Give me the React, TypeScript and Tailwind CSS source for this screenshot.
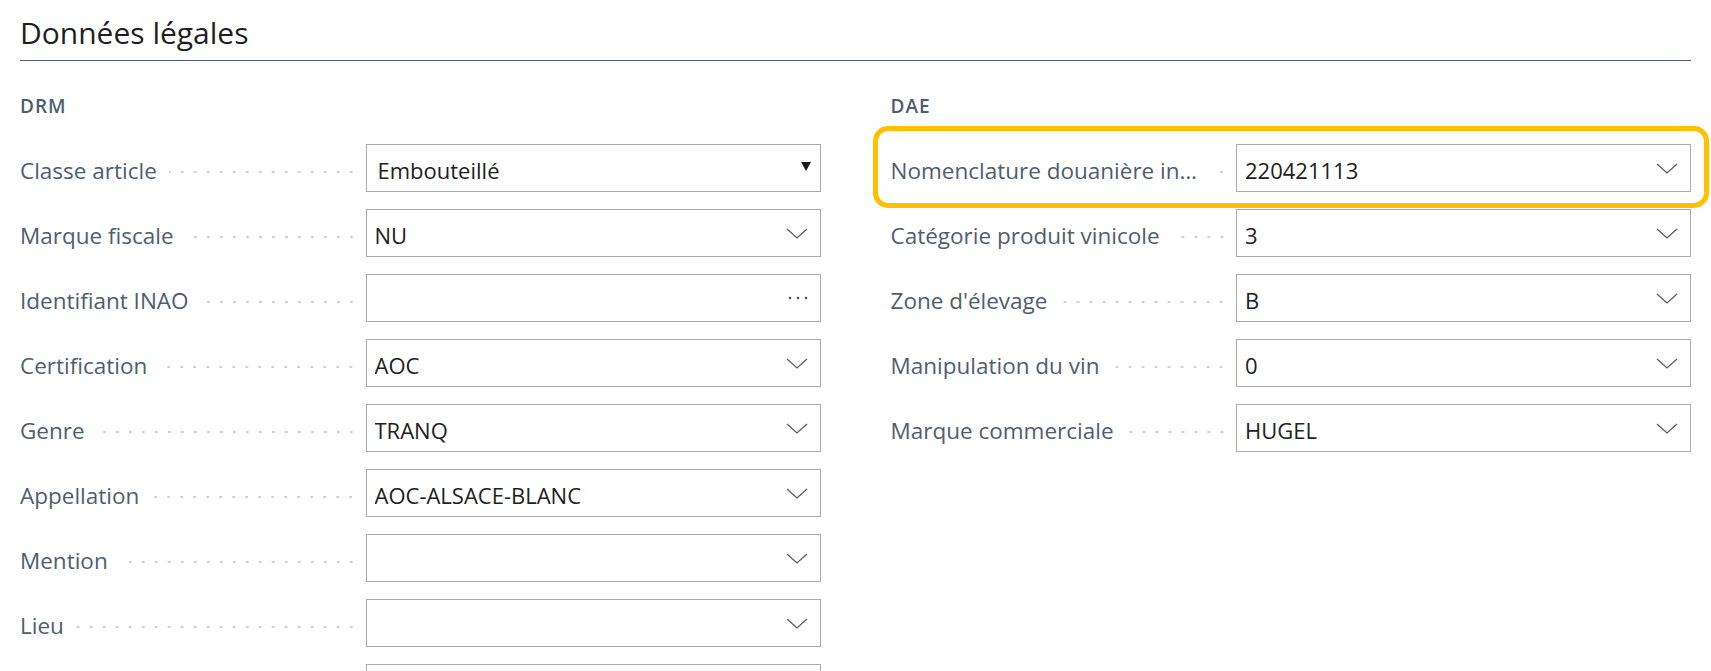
import React from "react"

type FieldKind = "lookup" | "assist" | "native"

interface Field {
  label: string
  value?: string
  kind: FieldKind
  highlighted?: boolean
}

const drmFields: Field[] = [
  { label: "Classe article", value: "Embouteillé", kind: "native" },
  { label: "Marque fiscale", value: "NU", kind: "lookup" },
  { label: "Identifiant INAO", kind: "assist" },
  { label: "Certification", value: "AOC", kind: "lookup" },
  { label: "Genre", value: "TRANQ", kind: "lookup" },
  { label: "Appellation", value: "AOC-ALSACE-BLANC", kind: "lookup" },
  { label: "Mention", kind: "lookup" },
  { label: "Lieu", kind: "lookup" },
  { label: "Couleur", kind: "lookup" },
]

const daeFields: Field[] = [
  { label: "Nomenclature douanière intracommunautaire", value: "220421113", kind: "lookup", highlighted: true },
  { label: "Catégorie produit vinicole", value: "3", kind: "lookup" },
  { label: "Zone d'élevage", value: "B", kind: "lookup" },
  { label: "Manipulation du vin", value: "0", kind: "lookup" },
  { label: "Marque commerciale", value: "HUGEL", kind: "lookup" },
]

function Chevron() {
  return (
    <svg width="22" height="11" viewBox="0 0 22 11" fill="none" className="shrink-0">
      <path d="M1 1 L11 10 L21 1" stroke="#5c5c5c" strokeWidth="1.3" />
    </svg>
  )
}

function Caret() {
  return (
    <svg width="10" height="9" viewBox="0 0 10 9" className="-mt-[3px] shrink-0">
      <polygon points="0,0 10,0 5,9" fill="#1a1a1a" />
    </svg>
  )
}

function Ellipsis() {
  return (
    <svg width="20" height="4" viewBox="0 0 20 4" className="shrink-0">
      <circle cx="2" cy="2" r="1.3" fill="#505050" />
      <circle cx="10" cy="2" r="1.3" fill="#505050" />
      <circle cx="18" cy="2" r="1.3" fill="#505050" />
    </svg>
  )
}

function FieldRow({ field }: { field: Field }) {
  const native = field.kind === "native"
  return (
    <div className="relative flex h-12 items-center">
      {field.highlighted && (
        <span className="pointer-events-none absolute -top-[18px] -bottom-[16px] -left-[18px] -right-[18px] rounded-[15px] border-[5px] border-[#ffc000]" />
      )}
      <div className="flex min-w-0 flex-1 items-center pr-2">
        <span className="min-w-0 truncate pt-[5px] text-[22.5px] text-[#525d6c]">{field.label}</span>
        <span className="ml-3 mt-[7px] h-1 min-w-[14px] flex-1 bg-[radial-gradient(circle,#c9cdd3_1px,transparent_1.6px)] bg-[length:13px_4px] bg-right bg-repeat-x" />
      </div>
      <div
        className={`flex h-12 w-[455px] shrink-0 items-center justify-between border border-[#ababab] bg-white text-[22px] text-[#212121] ${
          native ? "pl-[11px] pr-[9px]" : "pl-[8px] pr-3"
        }`}
      >
        <span className="truncate pt-[5px]">{field.value ?? ""}</span>
        {native && <Caret />}
        {field.kind === "lookup" && <Chevron />}
        {field.kind === "assist" && <Ellipsis />}
      </div>
    </div>
  )
}

function Group({ title, fields }: { title: string; fields: Field[] }) {
  return (
    <div>
      <h3 className="h-6 text-[19px] font-semibold leading-6 tracking-[1px] text-[#505c6d]">{title}</h3>
      <div className="mt-[26px] flex flex-col gap-[17px]">
        {fields.map((f) => (
          <FieldRow key={f.label} field={f} />
        ))}
      </div>
    </div>
  )
}

export default function App() {
  return (
    <div className="h-[671px] overflow-hidden bg-white px-5 pt-[15px] font-['Segoe_UI','Open_Sans',sans-serif]">
      <div className="border-b border-[#505c6d] pb-[9px]">
        <h2 className="h-9 text-[30px] leading-9 text-[#1f1f1f]">Données légales</h2>
      </div>
      <div className="mt-[33px] grid grid-cols-2 gap-x-[70px]">
        <Group title="DRM" fields={drmFields} />
        <Group title="DAE" fields={daeFields} />
      </div>
    </div>
  )
}
